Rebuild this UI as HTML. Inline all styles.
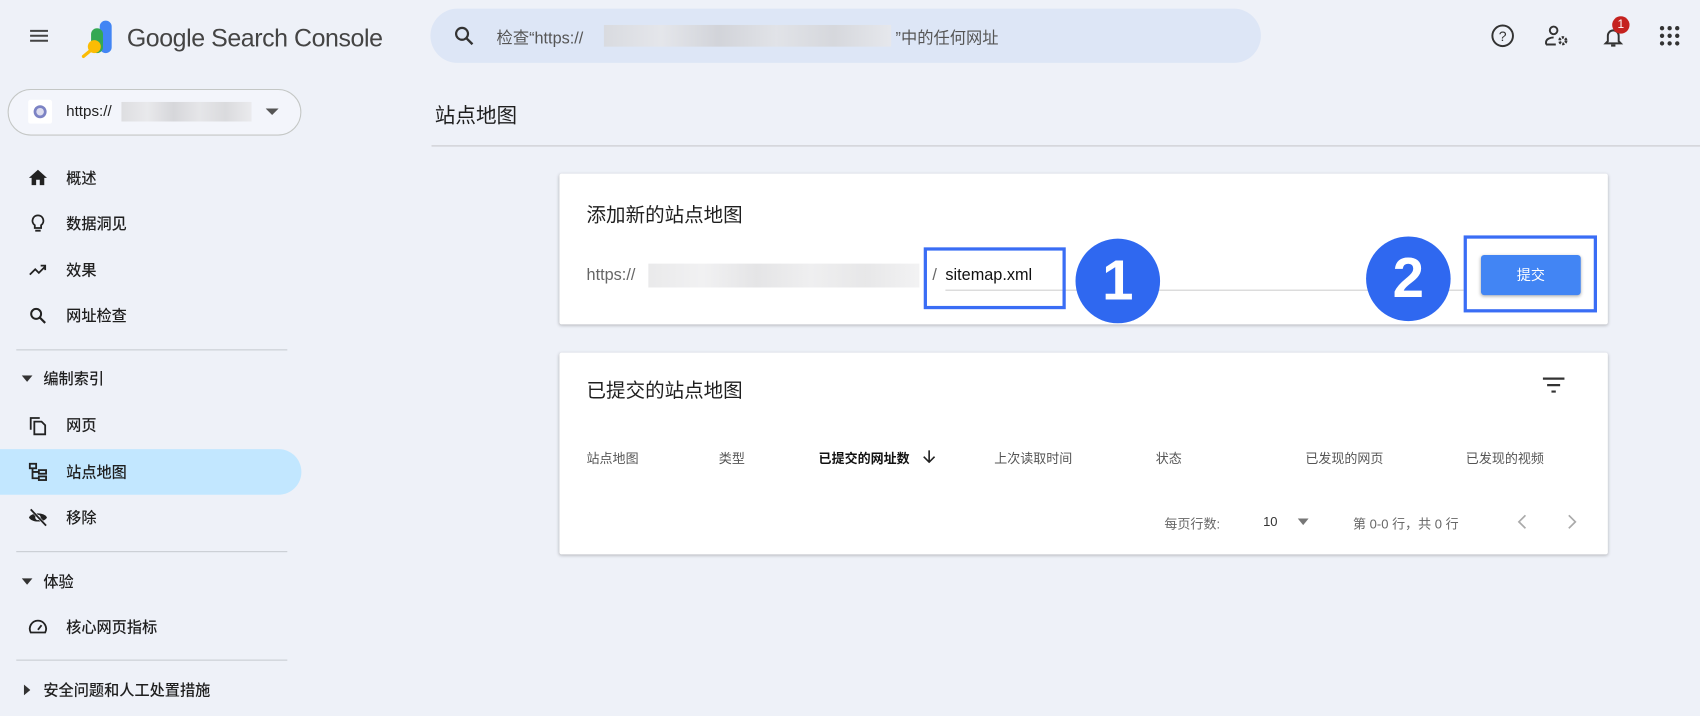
<!DOCTYPE html>
<html><head><meta charset="utf-8"><style>
*{margin:0;padding:0;box-sizing:border-box}
html,body{width:1700px;height:716px;overflow:hidden;background:#eef1f8}
#w{width:1568px;height:660px;transform:scale(1.08418,1.08485);transform-origin:0 0;position:relative;font-family:"Liberation Sans","Noto Sans CJK SC",sans-serif;color:#1f1f1f}
.a{position:absolute;white-space:nowrap}
.blur{position:absolute;background:linear-gradient(90deg,#d8d8da,#e6e6e8 20%,#cfcfd2 40%,#e2e2e4 60%,#d4d4d6 80%,#e8e8ea)}
.nav{position:absolute;left:61px;font-size:14px;color:#1f1f1f;transform:translateY(-50%);font-weight:500}
.ic{position:absolute;transform:translate(-50%,-50%)}
.card{position:absolute;background:#fff;box-shadow:0 1px 3px rgba(0,0,0,.25);border-radius:2px}
.th{position:absolute;top:414px;font-size:12px;color:#555}
</style></head><body><div id="w">
<svg class="ic" style="left:36px;top:33px" width="22" height="22" viewBox="0 0 24 24"><path d="M3 6h18v2H3zm0 5h18v2H3zm0 5h18v2H3z" fill="#444"/></svg>
<svg class="a" style="left:70px;top:17px" width="38" height="38" viewBox="0 0 38 38"><rect x="22" y="2" width="11" height="30" rx="5.5" fill="#4285f4"/><rect x="14" y="9" width="11" height="23" rx="5.5" fill="#34a853"/><circle cx="17" cy="26" r="6" fill="#fbbc04"/><path d="M13 30l-6 5" stroke="#fbbc04" stroke-width="3" stroke-linecap="round"/></svg>
<div class="a" style="left:117px;top:22px;font-size:23px;color:#444;letter-spacing:-0.4px">Google Search Console</div>
<div class="a" style="left:397px;top:8px;width:766px;height:50px;border-radius:25px;background:#dde6f6"></div>
<svg class="ic" style="left:428px;top:33px" width="22" height="22" viewBox="0 0 24 24"><circle cx="10" cy="10" r="6" fill="none" stroke="#333" stroke-width="2.2"/><path d="M14.5 14.5l6 6" stroke="#333" stroke-width="2.4"/></svg>
<div class="a" style="left:458px;top:24px;font-size:15px;color:#555">检查“https://</div>
<div class="blur" style="left:557px;top:23px;width:265px;height:20px;opacity:.8"></div>
<div class="a" style="left:826px;top:24px;font-size:15px;color:#555">”中的任何网址</div>
<svg class="ic" style="left:1386px;top:33px" width="24" height="24" viewBox="0 0 24 24"><circle cx="12" cy="12" r="9.5" fill="none" stroke="#333" stroke-width="1.8"/><text x="12" y="17" font-size="13" text-anchor="middle" fill="#333" font-family="Liberation Sans">?</text></svg>
<svg class="ic" style="left:1436px;top:33px" width="24" height="24" viewBox="0 0 24 24"><circle cx="9" cy="7" r="3.5" fill="none" stroke="#333" stroke-width="1.8"/><path d="M2 20v-2c0-3 4-4.5 7-4.5" fill="none" stroke="#333" stroke-width="1.8"/><path d="M2 20h9" stroke="#333" stroke-width="1.8"/><circle cx="17.5" cy="16.5" r="3" fill="none" stroke="#333" stroke-width="2.5" stroke-dasharray="2 1.2"/></svg>
<svg class="ic" style="left:1488px;top:34px" width="24" height="24" viewBox="0 0 24 24"><path d="M5 18h14l-2-2v-5a5 5 0 0 0-10 0v5z" fill="none" stroke="#333" stroke-width="1.8"/><path d="M10 20h4" stroke="#333" stroke-width="2"/></svg>
<div class="a" style="left:1487px;top:15px;width:16px;height:16px;border-radius:8px;background:#c5221f;color:#fff;font-size:11px;text-align:center;line-height:16px">1</div>
<svg class="ic" style="left:1540px;top:33px" width="20" height="20" viewBox="0 0 20 20" fill="#333"><circle cx="3" cy="3" r="2"/><circle cx="10" cy="3" r="2"/><circle cx="17" cy="3" r="2"/><circle cx="3" cy="10" r="2"/><circle cx="10" cy="10" r="2"/><circle cx="17" cy="10" r="2"/><circle cx="3" cy="17" r="2"/><circle cx="10" cy="17" r="2"/><circle cx="17" cy="17" r="2"/></svg>

<div class="a" style="left:7px;top:82px;width:271px;height:43px;border:1px solid #c4c7c5;border-radius:22px;background:#f3f5fb"></div>
<div class="a" style="left:26px;top:92px;width:22px;height:22px;background:#fff;border-radius:2px"></div>
<svg class="ic" style="left:37px;top:103px" width="14" height="14"><circle cx="7" cy="7" r="6" fill="#7c83c4"/><circle cx="7" cy="7" r="3.5" fill="#dde"/></svg>
<div class="a" style="left:61px;top:94px;font-size:14px">https://</div>
<div class="blur" style="left:112px;top:94px;width:120px;height:18px;opacity:.8"></div>
<svg class="ic" style="left:251px;top:103px" width="12" height="8"><path d="M0 1h12L6 7z" fill="#555"/></svg>

<svg class="ic" style="left:35px;top:164px" width="20" height="20" viewBox="0 0 24 24"><path d="M10 20v-6h4v6h5v-8h3L12 3 2 12h3v8z" fill="#222"/></svg>
<div class="nav" style="top:164px">概述</div>
<svg class="ic" style="left:35px;top:206px" width="20" height="20" viewBox="0 0 24 24"><path d="M12 3a6 6 0 0 0-3.5 10.9V17h7v-3.1A6 6 0 0 0 12 3zM9 20h6" fill="none" stroke="#222" stroke-width="2"/></svg>
<div class="nav" style="top:206px">数据洞见</div>
<svg class="ic" style="left:35px;top:249px" width="20" height="20" viewBox="0 0 24 24"><path d="M3 17l6-6 4 4 7-7M15 7h5v5" fill="none" stroke="#222" stroke-width="2"/></svg>
<div class="nav" style="top:249px">效果</div>
<svg class="ic" style="left:35px;top:291px" width="20" height="20" viewBox="0 0 24 24"><circle cx="10" cy="10" r="5.5" fill="none" stroke="#222" stroke-width="2.2"/><path d="M14 14l6 6" stroke="#222" stroke-width="2.4"/></svg>
<div class="nav" style="top:291px">网址检查</div>
<div class="a" style="left:15px;top:322px;width:250px;height:1px;background:#c8ccd2"></div>
<svg class="ic" style="left:25px;top:349px" width="10" height="6"><path d="M0 0h10L5 6z" fill="#333"/></svg>
<div class="nav" style="top:349px;left:40px">编制索引</div>
<svg class="ic" style="left:35px;top:392px" width="20" height="20" viewBox="0 0 24 24"><path d="M4 17V4h10" fill="none" stroke="#222" stroke-width="2"/><path d="M8 8h8l4 4v10H8z" fill="none" stroke="#222" stroke-width="2"/></svg>
<div class="nav" style="top:392px">网页</div>
<div class="a" style="left:0;top:414px;width:278px;height:42px;background:#c2e7ff;border-radius:0 21px 21px 0"></div>
<svg class="ic" style="left:35px;top:435px" width="20" height="20" viewBox="0 0 24 24" fill="none" stroke="#222" stroke-width="2"><rect x="3" y="3" width="7" height="5"/><rect x="13" y="10" width="8" height="4"/><rect x="13" y="17" width="8" height="4"/><path d="M6 8v11h7M6 12h7"/></svg>
<div class="nav" style="top:435px">站点地图</div>
<svg class="ic" style="left:35px;top:477px" width="20" height="20" viewBox="0 0 24 24"><path d="M2 12c3-6 17-6 20 0-3 6-17 6-20 0z" fill="#222"/><circle cx="12" cy="12" r="3" fill="#eef1f8"/><path d="M4 3l17 18" stroke="#eef1f8" stroke-width="3"/><path d="M4 3l17 18" stroke="#222" stroke-width="2"/></svg>
<div class="nav" style="top:477px">移除</div>
<div class="a" style="left:15px;top:508px;width:250px;height:1px;background:#c8ccd2"></div>
<svg class="ic" style="left:25px;top:536px" width="10" height="6"><path d="M0 0h10L5 6z" fill="#333"/></svg>
<div class="nav" style="top:536px;left:40px">体验</div>
<svg class="ic" style="left:35px;top:578px" width="20" height="20" viewBox="0 0 24 24"><path d="M4 18a9 9 0 1 1 16 0z" fill="none" stroke="#222" stroke-width="2"/><path d="M12 15l4-5" stroke="#222" stroke-width="2"/></svg>
<div class="nav" style="top:578px">核心网页指标</div>
<div class="a" style="left:15px;top:608px;width:250px;height:1px;background:#c8ccd2"></div>
<svg class="ic" style="left:25px;top:636px" width="6" height="10"><path d="M0 0v10l6-5z" fill="#333"/></svg>
<div class="nav" style="top:636px;left:40px">安全问题和人工处置措施</div>

<div class="a" style="left:401px;top:92px;font-size:19px">站点地图</div>
<div class="a" style="left:398px;top:134px;width:1170px;height:1px;background:#c8c8cc"></div>

<div class="card" style="left:516px;top:160px;width:967px;height:139px"></div>
<div class="a" style="left:541px;top:184px;font-size:18px">添加新的站点地图</div>
<div class="a" style="left:541px;top:245px;font-size:15px;color:#666">https://</div>
<div class="blur" style="left:598px;top:243px;width:250px;height:22px;opacity:.55"></div>
<div class="a" style="left:860px;top:245px;font-size:15px;color:#666">/</div>
<div class="a" style="left:872px;top:245px;font-size:15px;color:#111">sitemap.xml</div>
<div class="a" style="left:872px;top:267px;width:478px;height:1px;background:#d0d0d0"></div>
<div class="a" style="left:852px;top:228px;width:131px;height:57px;border:3px solid #3a6df5"></div>
<div class="a" style="left:992px;top:220px;width:78px;height:78px;border-radius:50%;background:#2f68f0;color:#fff;font-size:52px;font-weight:bold;text-align:center;line-height:78px">1</div>
<div class="a" style="left:1260px;top:218px;width:78px;height:78px;border-radius:50%;background:#2f68f0;color:#fff;font-size:52px;font-weight:bold;text-align:center;line-height:78px">2</div>
<div class="a" style="left:1350px;top:217px;width:123px;height:71px;border:3px solid #3a6df5"></div>
<div class="a" style="left:1366px;top:235px;width:92px;height:37px;background:#4285f4;border-radius:3px;box-shadow:0 1px 3px rgba(0,0,0,.3);color:#fff;font-size:13px;text-align:center;line-height:37px">提交</div>

<div class="card" style="left:516px;top:325px;width:967px;height:186px"></div>
<div class="a" style="left:541px;top:346px;font-size:18px">已提交的站点地图</div>
<svg class="ic" style="left:1433px;top:355px" width="20" height="14"><path d="M0 1h20M4 7h12M8 13h4" stroke="#333" stroke-width="2"/></svg>
<div class="th" style="left:541px">站点地图</div>
<div class="th" style="left:663px">类型</div>
<div class="th" style="left:755px;color:#111;font-weight:bold">已提交的网址数</div>
<svg class="ic" style="left:857px;top:421px" width="12" height="12"><path d="M6 0v11M1 6l5 5 5-5" fill="none" stroke="#222" stroke-width="1.5"/></svg>
<div class="th" style="left:917px">上次读取时间</div>
<div class="th" style="left:1066px">状态</div>
<div class="th" style="left:1204px">已发现的网页</div>
<div class="th" style="left:1352px">已发现的视频</div>
<div class="a" style="left:1074px;top:474px;font-size:12px;color:#666">每页行数:</div>
<div class="a" style="left:1165px;top:474px;font-size:12px;color:#333">10</div>
<svg class="ic" style="left:1202px;top:481px" width="10" height="6"><path d="M0 0h10L5 6z" fill="#777"/></svg>
<div class="a" style="left:1248px;top:474px;font-size:12px;color:#666">第 0-0 行，共 0 行</div>
<svg class="ic" style="left:1404px;top:481px" width="10" height="14"><path d="M8 1L2 7l6 6" fill="none" stroke="#aaa" stroke-width="1.6"/></svg>
<svg class="ic" style="left:1450px;top:481px" width="10" height="14"><path d="M2 1l6 6-6 6" fill="none" stroke="#aaa" stroke-width="1.6"/></svg>
</div></body></html>
